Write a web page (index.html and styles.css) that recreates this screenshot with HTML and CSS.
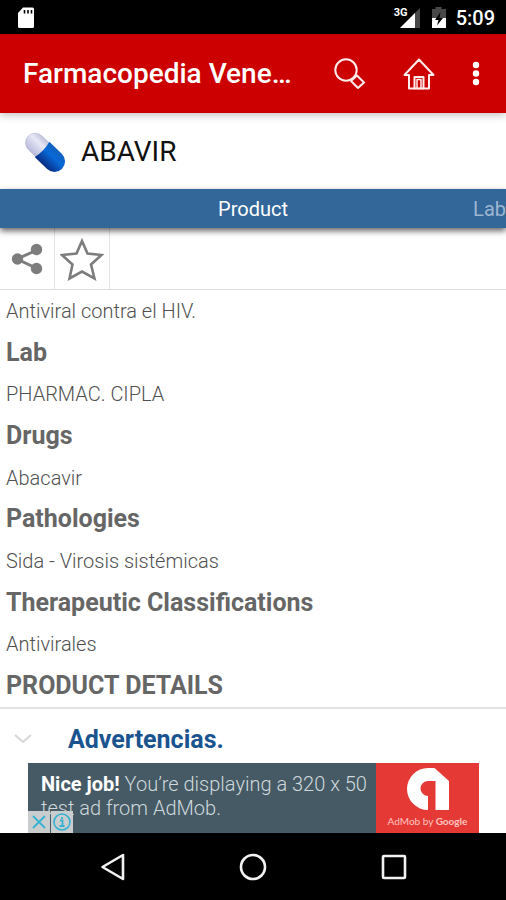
FILE: index.html
```html
<!DOCTYPE html>
<html lang="es">
<head>
<meta charset="utf-8">
<meta name="viewport" content="width=device-width, initial-scale=1">
<title>Farmacopedia</title>
<link rel="stylesheet" href="styles.css">
</head>
<body>
<div class="status">
  <svg class="sd" width="18" height="22" viewBox="0 0 18 22"><path d="M6 .5h9.500q1.500 0 1.500 1.500v17.500q0 1.500-1.500 1.500H2.500Q1 21 1 19.500V6z" fill="#fff"/><path d="M7.500 3v3.500M11 3v3.500M14.500 3v3.500" stroke="#000" stroke-width="1.600"/></svg>
  <span class="network">3G</span>
  <svg class="signal" width="22" height="20" viewBox="0 0 22 20"><path d="M21 0v20H1z" fill="#484848"/><path d="M16 5v15H1z" fill="#fff"/></svg>
  <svg class="battery" width="16" height="22" viewBox="0 0 16 22"><path d="M4.500 0h6v2H15v9H1V2h3.500z" fill="#484848"/><path d="M1 11h14v10H1z" fill="#fff"/><path d="M9.500 5 4 13h3.500L6 18.500 12 11H8.500z" fill="#000"/></svg>
  <span class="clock">5:09</span>
</div>
<header class="appbar">
  <h1>Farmacopedia Vene…</h1>
  <button aria-label="Search"><svg width="32" height="32" viewBox="0 0 32 32" fill="none" stroke="#ffecec" stroke-width="2"><circle cx="12" cy="12" r="10.700"/><path d="m17 23 6-5.500 7 7-6 5.500z" stroke-linejoin="round"/></svg></button>
  <button aria-label="Home"><svg width="32" height="32" viewBox="0 0 32 32" fill="none" stroke="#ffecec" stroke-width="2" stroke-linejoin="round"><path d="M16 1.500 1.500 17H6v13.500h5.500V19h9v11.500H26V17h4.500z"/><path d="M14 30.500V21.500h4v9z" stroke-width="1.500"/><path d="M11 30.500h10"/></svg></button>
  <button aria-label="More options"><svg width="8" height="26" viewBox="0 0 8 26" fill="#fff"><circle cx="4" cy="4" r="3.200"/><circle cx="4" cy="12.500" r="3.200"/><circle cx="4" cy="21" r="3.200"/></svg></button>
</header>
<section class="product">
  <svg width="44" height="44" viewBox="0 0 44 44">
    <defs>
      <linearGradient id="white" x1="0" y1="0" x2="0" y2="1"><stop offset="0" stop-color="#c2c2dc"/><stop offset=".35" stop-color="#e8e8f7"/><stop offset="1" stop-color="#b9badb"/></linearGradient>
      <linearGradient id="blue" x1="0" y1="0" x2="0" y2="1"><stop offset="0" stop-color="#1261be"/><stop offset=".4" stop-color="#0869d8"/><stop offset="1" stop-color="#092c83"/></linearGradient>
    </defs>
    <g transform="translate(1.500 2) rotate(44 22 22) scale(.96)">
      <path d="M20 12H8a10 10 0 0 0 0 20h12z" transform="translate(-1)" fill="url(#white)" stroke="#aaaac8" stroke-width=".5"/>
      <path d="M17 11h18a11 11 0 0 1 0 22H17q3-11 0-22z" fill="url(#blue)"/>
    </g>
  </svg>
  <h2>ABAVIR</h2>
</section>
<nav class="tabs"><a href="#product" class="current">Product</a><a href="#lab" class="next">Lab</a></nav>
<div class="actions">
  <button aria-label="Share"><svg width="32" height="32" viewBox="0 0 32 32" fill="#7d7d7d"><path d="M26 7 6 16l20 9.500" fill="none" stroke="#7d7d7d" stroke-width="3"/><circle cx="6.500" cy="16" r="5.700"/><circle cx="25.500" cy="6.500" r="5.700"/><circle cx="25.500" cy="25.500" r="5.700"/></svg></button>
  <button aria-label="Favourite"><svg width="44" height="44" viewBox="0 0 44 44" fill="none" stroke="#7d7d7d" stroke-width="2.600"><path d="m22 4 5.500 12.500 14 1.500-10.500 9.500 3.500 14L22 34.500 9.500 41.500l3-14L2 18l14.500-1.500z"/></svg></button>
</div>
<main id="product" class="details">
  <p>Antiviral contra el HIV.</p>
  <h3>Lab</h3>
  <p>PHARMAC. CIPLA</p>
  <h3>Drugs</h3>
  <p>Abacavir</p>
  <h3>Pathologies</h3>
  <p>Sida - Virosis sistémicas</p>
  <h3>Therapeutic Classifications</h3>
  <p>Antivirales</p>
  <h3>PRODUCT DETAILS</h3>
</main>
<button class="accordion"><svg width="18" height="10" viewBox="0 0 18 10" fill="none" stroke="#d6d6d6" stroke-width="2"><path d="m1 1 8 7 8-7"/></svg>Advertencias.</button>
<aside class="ad">
  <p class="adtext"><b>Nice job!</b> You’re displaying a 320 x 50 test ad from AdMob.</p>
  <div class="brand">
    <svg width="44" height="44" viewBox="0 0 44 44"><path d="M28.500 1 43 14V43H29.500V14H22a7.500 7.500 0 0 0 0 15v14A21 21 0 0 1 22 1z" fill="#fff"/></svg>
    <span>AdMob by <b>Google</b></span>
  </div>
  <div class="adchoices">
    <button aria-label="Close ad"><svg width="14" height="14" viewBox="0 0 14 14" stroke="#35b2d2" stroke-width="1.800"><path d="m1 1 12 12M13 1 1 13"/></svg></button>
    <button aria-label="Ad information"><svg width="18" height="18" viewBox="0 0 18 18" fill="none" stroke="#35b2d2" stroke-width="1.600"><circle cx="9" cy="9" r="8"/><path d="M7 7.500h2.500v5M6.500 13h5M9 4v2" stroke-width="1.800"/></svg></button>
  </div>
</aside>
<footer class="navbar">
  <button aria-label="Back"><svg width="28" height="28" viewBox="0 0 28 28" fill="none" stroke="#f2f2f2" stroke-width="2.600" stroke-linejoin="round"><path d="M25 2v24L4.500 14z"/></svg></button>
  <button aria-label="Home screen"><svg width="28" height="28" viewBox="0 0 28 28" fill="none" stroke="#f2f2f2" stroke-width="2.600"><circle cx="14" cy="14" r="12"/></svg></button>
  <button aria-label="Recent apps"><svg width="28" height="28" viewBox="0 0 28 28" fill="none" stroke="#f2f2f2" stroke-width="2.600"><rect x="3" y="3" width="22" height="22" rx="1"/></svg></button>
</footer>
</body>
</html>
```
FILE: styles.css
```css
* { box-sizing: border-box; }
body {
  margin: 0;
  min-height: 100vh;
  display: flex;
  flex-direction: column;
  background: #fff;
  color: #666;
  font-family: Roboto, sans-serif;
  overflow-x: hidden;
}
h1, h2, h3, p { margin: 0; }
button {
  display: flex;
  align-items: center;
  justify-content: center;
  padding: 0;
  border: 0;
  background: none;
  font: inherit;
}
svg { display: block; flex: none; }

.status {
  display: flex;
  align-items: center;
  height: 34px;
  padding: 2px 11px 0 17px;
  background: #000;
  color: #fff;
}
.sd { margin-right: auto; }
.network {
  align-self: flex-start;
  padding-top: 4px;
  font-size: 11px;
  line-height: 13px;
  font-weight: 700;
  z-index: 1;
}
.signal { margin-left: -9px; }
.battery { margin: 0 9px 0 10px; }
.clock { font-size: 20px; font-weight: 500; line-height: 24px; }

.appbar {
  display: flex;
  align-items: center;
  height: 79px;
  padding: 0 26px 0 23px;
  background: #c00;
  color: #fff;
  box-shadow: 0 2px 8px rgba(0, 0, 0, .25);
  z-index: 1;
}
.appbar h1 { flex: 1; font-size: 28px; line-height: 36px; font-weight: 500; white-space: nowrap; }
.appbar button + button { margin-left: 37px; }

.product {
  display: flex;
  align-items: center;
  gap: 15px;
  height: 76px;
  padding: 2px 22px 0;
  color: #111;
}
.product h2 { font-size: 28px; line-height: 36px; font-weight: 400; }

.tabs {
  display: grid;
  grid-template-columns: 1fr auto 1fr;
  align-items: center;
  height: 39px;
  background: #336699;
  box-shadow: 0 3px 6px rgba(0, 0, 0, .6);
  font-size: 20px;
  line-height: 24px;
  z-index: 1;
}
.tabs a { color: #fff; text-decoration: none; }
.current { grid-column: 2; }
.next { justify-self: end; }
.tabs .next { color: #9db6d0; }

.actions { display: flex; height: 62px; border-bottom: 1px solid #ddd; }
.actions button { width: 55px; border-right: 1px solid #e4e4e4; }

.details {
  flex: 1;
  display: grid;
  grid-auto-rows: 1fr;
  align-items: center;
  padding: 0 6px;
}
.details p { color: #505050; font-size: 20px; line-height: 28px; font-weight: 300; }
.details h3 { font-size: 25px; line-height: 32px; font-weight: 700; }

.accordion {
  height: 56px;
  justify-content: flex-start;
  gap: 36px;
  padding: 6px 14px 0;
  border-top: 2px solid #e2e2e2;
  color: #1a5490;
  font-size: 25px;
  font-weight: 700;
}

.ad {
  position: relative;
  display: flex;
  height: 70px;
  margin: 0 27px 0 28px;
  background: #455a64;
  color: #cfd8dc;
}
.adtext { flex: 1; padding: 9px 0 0 13px; font-size: 20px; line-height: 24px; font-weight: 300; }
.adtext b { color: #fff; font-weight: 700; }
.brand {
  display: flex;
  flex-direction: column;
  align-items: center;
  gap: 3px;
  width: 103px;
  padding-top: 4px;
  background: #e53935;
  color: #ffc4c0;
  font-family: Lato, sans-serif;
  font-size: 10px;
  line-height: 14px;
}
.brand b { font-weight: 700; }
.adchoices { position: absolute; left: 0; bottom: 0; display: flex; gap: 1px; }
.adchoices button { width: 22px; height: 22px; background: #cacdce; }

.navbar {
  display: flex;
  align-items: center;
  justify-content: center;
  gap: 113px;
  height: 67px;
  background: #000;
}
```
